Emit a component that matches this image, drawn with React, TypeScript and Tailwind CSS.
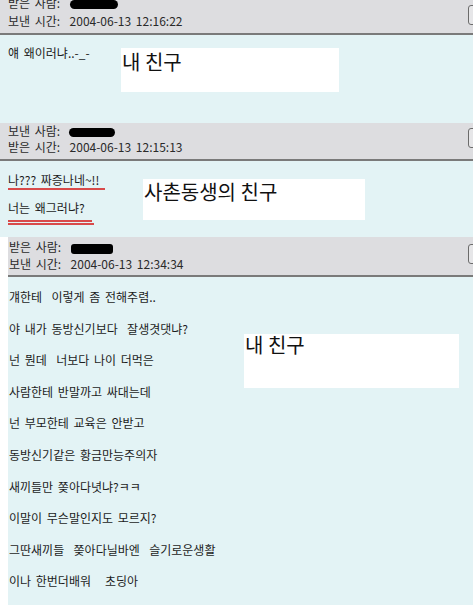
const kr = "font-['Noto_Sans_CJK_KR',sans-serif]";

function Check({ className }: { className: string }) {
  return (
    <div className={`absolute h-[20px] w-[12px] rounded-[3px] border border-[#6b6b6b] bg-[#e6e6e8] ${className}`} />
  );
}

function Note({ text, className }: { text: string; className: string }) {
  return (
    <div className={`absolute bg-white text-[20px] leading-[20px] text-[#111] [word-spacing:0px] ${className}`}>
      <span className="whitespace-pre">{text}</span>
    </div>
  );
}

const lines = [
  "걔한테  이렇게 좀 전해주렴..",
  "야 내가 동방신기보다  잘생겻댓냐?",
  "넌 뭔데  너보다 나이 더먹은",
  "사람한테 반말까고 싸대는데",
  "넌 부모한테 교육은 안받고",
  "동방신기같은 황금만능주의자",
  "새끼들만 쫒아다녓냐?ㅋㅋ",
  "이말이 무슨말인지도 모르지?",
  "그딴새끼들  쫒아다닐바엔  슬기로운생활",
  "이나 한번더배워   초딩아",
];

export default function App() {
  return (
    <div className={`relative h-[605px] w-[473px] overflow-hidden bg-white text-[12px] text-[#1c1c1c] [word-spacing:2px] ${kr}`}>
      {/* message 1 */}
      <div className="relative h-[33px] overflow-hidden bg-[#dddde0] px-[8px] text-[#2a2a2a]">
        <div className="-mt-[6px] leading-[18px]">
          <p className="whitespace-pre">받은 사람: <span className="ml-[5px] inline-block h-[9px] w-[48px] rounded-full bg-black align-middle" /></p>
          <p className="whitespace-pre">보낸 시간:  2004-06-13 12:16:22</p>
        </div>
        <Check className="left-[468px] top-[5px]" />
      </div>
      <div className="h-[2px] bg-[#7a7a7a]" />
      <div className="relative h-[88px] bg-[#e3f3f5] px-[8px] pt-[9px] leading-[18px]">
        <p className="whitespace-pre">얘 왜이러냐..-_-</p>
        <Note text="내 친구" className="left-[121px] top-[13px] h-[44px] w-[218px] pl-[1px] pt-[4px]" />
      </div>

      {/* message 2 */}
      <div className="relative h-[36px] bg-[#dddde0] px-[8px] leading-[16px] text-[#2a2a2a]">
        <p className="whitespace-pre">보낸 사람: <span className="ml-[4px] inline-block h-[9px] w-[46px] rounded-full bg-black align-middle" /></p>
        <p className="whitespace-pre">받은 시간:  2004-06-13 12:15:13</p>
        <Check className="left-[468px] top-[5px]" />
      </div>
      <div className="h-[2px] bg-[#7a7a7a]" />
      <div className="relative h-[76px] bg-[#e3f3f5] px-[8px] pt-[11px] leading-[16px]">
        <p className="whitespace-pre">나??? 짜증나네~!!</p>
        <div className="h-[2px] w-[97px] bg-[#d84a4a]" />
        <p className="mt-[10px] whitespace-pre">너는 왜그러냐?</p>
        <div className="mt-[4px] h-[2px] w-[84px] bg-[#d84a4a]" />
        <div className="mt-[1px] h-[2px] w-[86px] bg-[#d84a4a]" />
        <Note text="사촌동생의 친구" className="left-[143px] top-[18px] h-[41px] w-[222px] pl-[1px] pt-[3px]" />
      </div>

      {/* message 3 */}
      <div className="ml-[8px]">
        <div className="relative h-[38px] bg-[#dddde0] px-[1px] pt-[1px] leading-[17px] text-[#2a2a2a]">
          <p className="whitespace-pre">받은 사람: <span className="ml-[5px] inline-block h-[10px] w-[42px] rounded-[3px] bg-black align-middle" /></p>
          <p className="whitespace-pre">보낸 시간:  2004-06-13 12:34:34</p>
          <Check className="left-[460px] top-[7px]" />
        </div>
        <div className="h-[2px] bg-[#7a7a7a]" />
        <div className="relative h-[330px] bg-[#e3f3f5] px-[1px] pt-[4px] leading-[31.6px]">
          {lines.map((l) => (
            <p key={l} className="whitespace-pre">{l}</p>
          ))}
          <Note text="내 친구" className="left-[236px] top-[57px] h-[54px] w-[215px] pl-[1px] pt-[1px]" />
        </div>
      </div>
    </div>
  );
}
